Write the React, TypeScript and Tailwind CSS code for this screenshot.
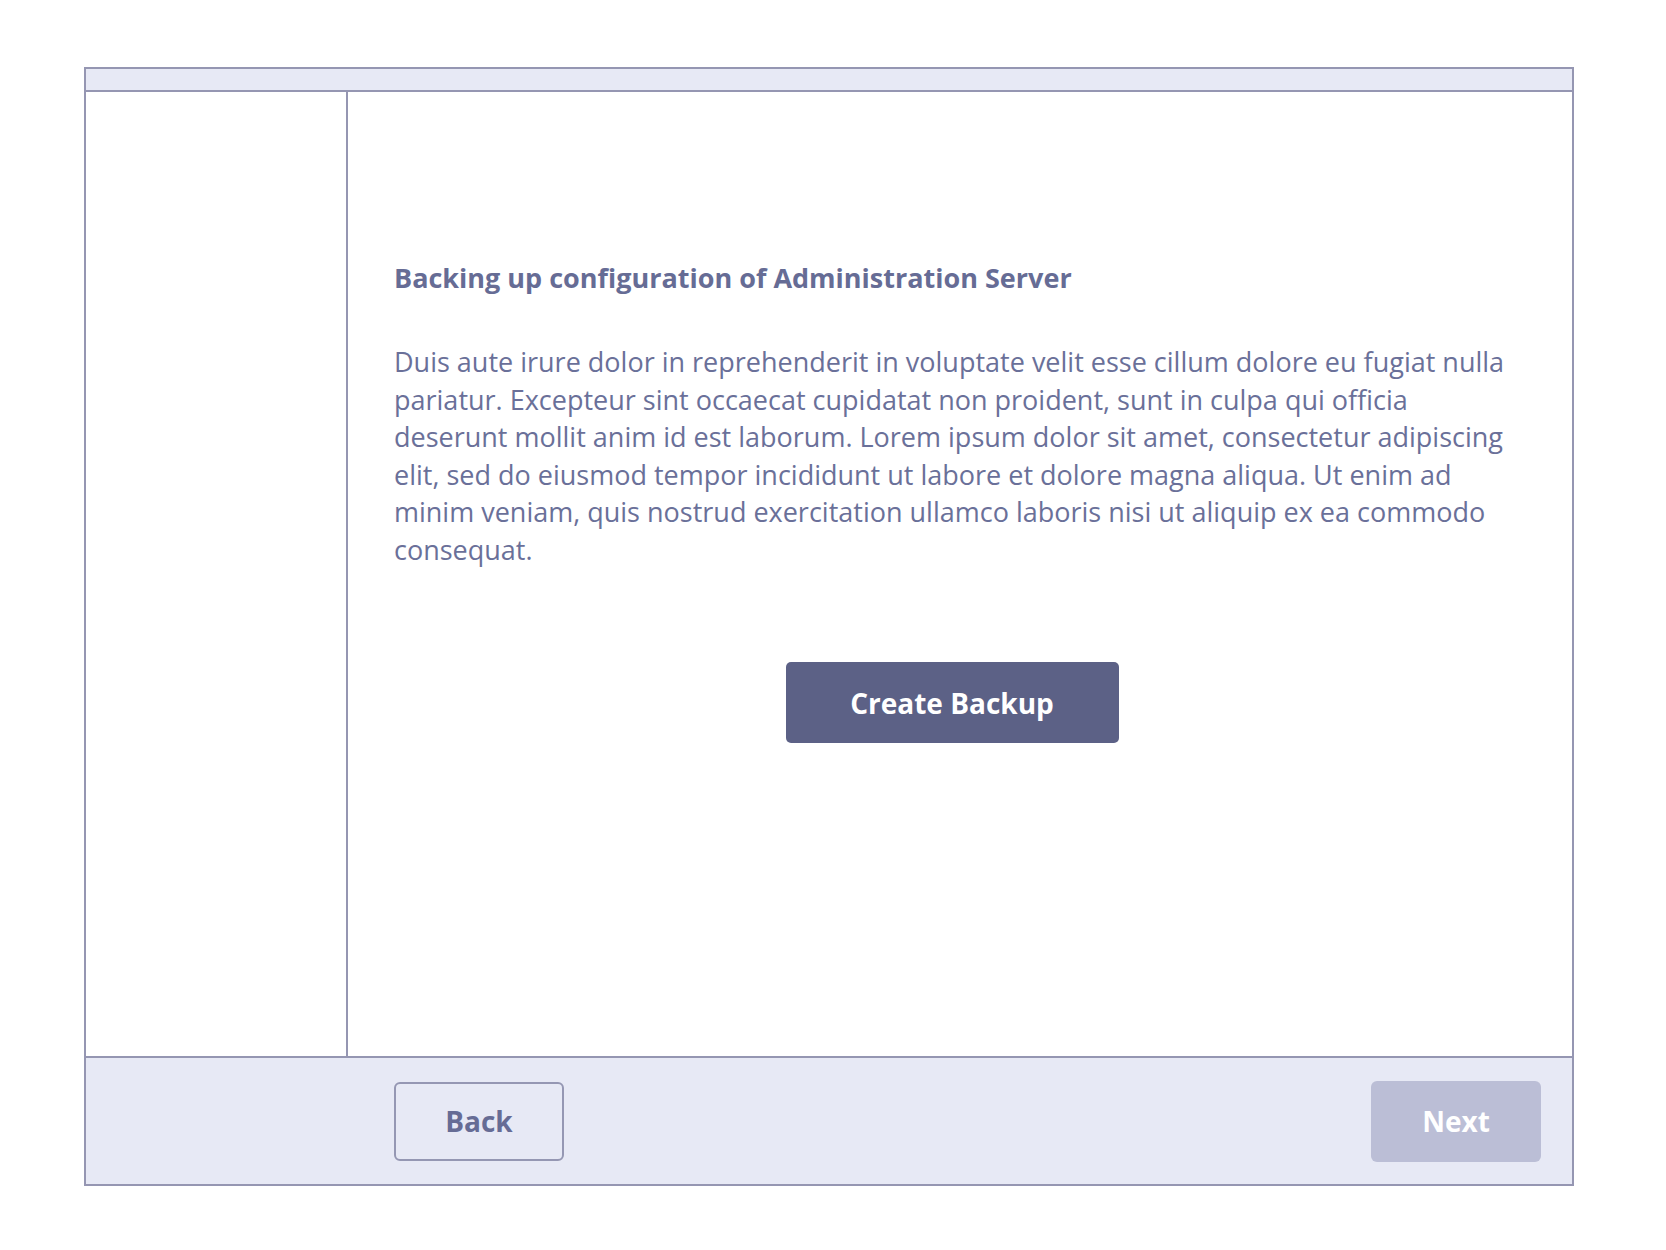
export default function App() {
  return (
    <div
      className="min-h-screen bg-white pt-[67px] pl-[84px]"
      style={{ fontFamily: '"Open Sans", "Noto Sans", sans-serif' }}
    >
      <div className="w-[1490px] h-[1119px] border-2 border-[#9596b2] flex flex-col">
        {/* top strip */}
        <div className="h-[23px] bg-[#e7e9f5] border-b-2 border-[#9596b2]" />

        <div className="flex flex-1 min-h-0">
          {/* sidebar */}
          <aside className="w-[262px] border-r-2 border-[#9596b2] shrink-0" />

          {/* main */}
          <main className="flex-1 pl-[46px] pr-[62px] pt-[168px]">
            <h2 className="text-[27px] leading-[36px] font-bold text-[#666c95]">
              Backing up configuration of Administration Server
            </h2>
            <p className="mt-[47px] text-[27px] leading-[37.5px] text-[#6a7099]">
              Duis aute irure dolor in reprehenderit in voluptate velit esse cillum dolore eu fugiat nulla
              pariatur. Excepteur sint occaecat cupidatat non proident, sunt in culpa qui officia deserunt
              mollit anim id est laborum. Lorem ipsum dolor sit amet, consectetur adipiscing elit, sed do
              eiusmod tempor incididunt ut labore et dolore magna aliqua. Ut enim ad minim veniam, quis
              nostrud exercitation ullamco laboris nisi ut aliquip ex ea commodo consequat.
            </p>
            <div className="flex justify-center mt-[94px]">
              <button className="w-[333px] h-[81px] rounded-[5px] bg-[#5c6186] text-white text-[28px] font-bold">
                Create Backup
              </button>
            </div>
          </main>
        </div>

        {/* footer */}
        <div className="h-[128px] shrink-0 bg-[#e7e9f5] border-t-2 border-[#9596b2] flex items-center justify-between pl-[308px] pr-[31px]">
          <button className="w-[170px] h-[79px] rounded-[6px] border-2 border-[#9597b3] text-[28px] font-bold text-[#666c95]">
            Back
          </button>
          <button className="w-[170px] h-[81px] rounded-[6px] bg-[#bbbed6] text-white text-[28px] font-bold">
            Next
          </button>
        </div>
      </div>
    </div>
  );
}
